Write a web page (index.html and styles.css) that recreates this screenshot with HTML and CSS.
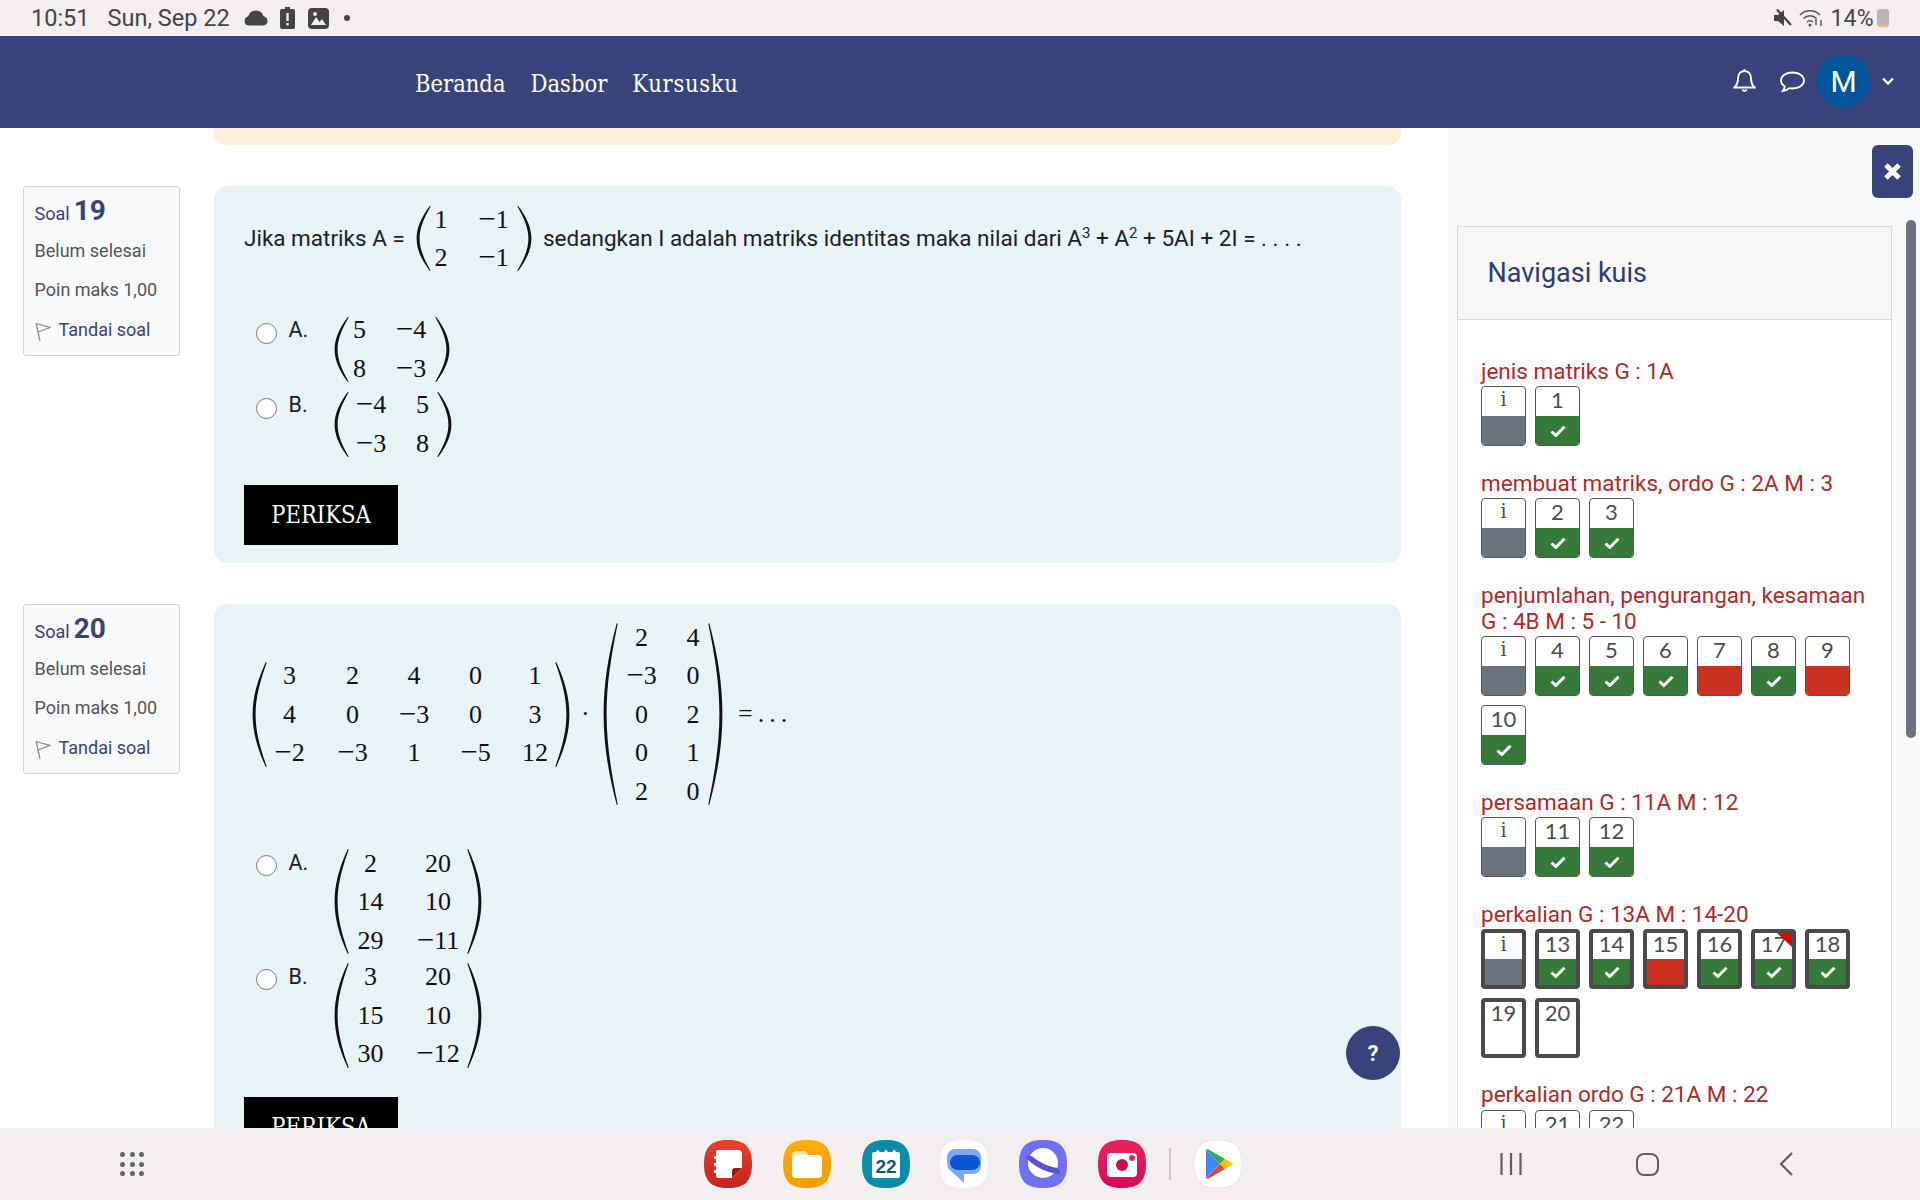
FILE: index.html
```html
<!DOCTYPE html>
<html lang="id">
<head>
<meta charset="utf-8">
<title>Kuis</title>
<link rel="stylesheet" href="styles.css">
</head>
<body>
<svg class="defs" aria-hidden="true">
  <symbol id="paren" viewBox="0 0 15 100" preserveAspectRatio="none"><path d="M13.800 0C5 18 .6 34 .6 50S5 82 13.800 100l.9-.4C7.800 81 3.600 66 3.600 50S7.800 19 14.700.4Z"/></symbol>
  <symbol id="check" viewBox="0 0 16 12"><path d="M1.500 6.500 5.800 10.500 14.500 1.800" fill="none" stroke="#fff" stroke-width="3"/></symbol>
  <symbol id="flag" viewBox="0 0 16 20"><path d="M1 1 5 19M1 1.500 15 5.500 3 10" fill="none" stroke="#8a8a8a" stroke-width="1.300"/></symbol>
</svg>
<div class="app">
  <div class="status">
    <span class="time">10:51</span><span class="date">Sun, Sep 22</span>
    <svg class="si si-cloud" viewBox="0 0 25 16"><path d="M5 15.500a4.500 4.500 0 0 1-.8-8.900A8 8 0 0 1 12 .5a8 8 0 0 1 7.500 5.800A4.700 4.700 0 0 1 20 15.500Z" fill="#444"/></svg>
    <svg class="si si-batt" viewBox="0 0 15 22"><path d="M5 0h5v2h3a2 2 0 0 1 2 2v16a2 2 0 0 1-2 2H2a2 2 0 0 1-2-2V4a2 2 0 0 1 2-2h3Z" fill="#444"/><rect x="6.300" y="6" width="2.400" height="8" fill="#f3eff1"/><rect x="6.300" y="16" width="2.400" height="2.400" fill="#f3eff1"/></svg>
    <svg class="si si-img" viewBox="0 0 21 21"><rect width="21" height="21" rx="4" fill="#444"/><path d="M3 17 8 9l3.500 5L14 11l4 6Z" fill="#f3eff1"/><circle cx="7" cy="6" r="2" fill="#f3eff1"/></svg>
    <span class="sdot"></span>
    <span class="status-right">
      <svg class="si si-mute" viewBox="0 0 18 18"><path d="M0 6h4l6-5v16l-6-5H0Z" fill="#444"/><path d="M3 .5 17 16" stroke="#444" stroke-width="2.200"/></svg>
      <svg class="si si-wifi" viewBox="0 0 25 18"><g fill="none" stroke="#555" stroke-width="1.500"><path d="M1 6a14 14 0 0 1 20 0"/><path d="M4.500 9.500a9 9 0 0 1 13 0"/><path d="M8 13a4 4 0 0 1 6 0"/></g><circle cx="11" cy="16" r="1.500" fill="#555"/><path d="M17 10v6M22 17v-6" stroke="#444" stroke-width="1.300"/></svg>
      <span class="pct">14%</span>
      <span class="sbatt"></span>
    </span>
  </div>

  <header class="top">
    <nav class="menu"><a>Beranda</a><a>Dasbor</a><a>Kursusku</a></nav>
    <div class="usernav">
      <svg class="bell" viewBox="0 0 23 25"><path d="M11.500 3c4.500 0 6.500 3.500 6.500 7.500 0 4.500 1.500 7 3.500 9H1.500c2-2 3.500-4.500 3.500-9C5 6.500 7 3 11.500 3ZM11.500 1v2M9.500 21.500c.5 1.800 3.500 1.800 4 0" fill="none" stroke="#fff" stroke-width="1.900"/></svg>
      <svg class="chat" viewBox="0 0 25 22"><path d="M12.500 1.500C6 1.500 1 5 1 9.500c0 2.600 1.600 4.600 3.800 6-.3 1.800-1 3.300-2 4.500 2.600-.4 5-1.400 6.500-2.800 1 .2 2.100.3 3.200.3 6.500 0 11.500-3.500 11.500-8s-5-8-11.500-8Z" fill="none" stroke="#fff" stroke-width="1.800"/></svg>
      <span class="avatar">M</span>
      <svg class="chev" viewBox="0 0 12 8"><path d="M1 1.500 6 6.500 11 1.500" fill="none" stroke="#fff" stroke-width="2.400"/></svg>
    </div>
  </header>

  <main class="main">
    <section class="content">
      <div class="notice"></div>

      <article class="q">
        <div class="info">
          <div class="qno">Soal <b>19</b></div>
          <div class="inf">Belum selesai</div>
          <div class="inf">Poin maks 1,00</div>
          <div class="inf tandai"><svg class="flag"><use href="#flag"/></svg>Tandai soal</div>
        </div>
        <div class="qbox">
          <div class="qtext">
            <span class="t1">Jika matriks A =</span>
            <span class="mx r2">
              <svg class="par"><use href="#paren"/></svg>
              <span class="grid g-q19"><i>1</i><i><span class="m">−</span>1</i><i>2</i><i><span class="m">−</span>1</i></span>
              <svg class="par flip"><use href="#paren"/></svg>
            </span>
            <span class="t2">sedangkan I adalah matriks identitas maka nilai dari A<sup>3</sup> + A<sup>2</sup> + 5AI + 2I = . . . .</span>
          </div>
          <div class="opts">
            <div class="opt"><input class="radio" type="radio" name="q19"><span class="lab">A.</span>
              <span class="mx r2"><svg class="par"><use href="#paren"/></svg><span class="grid g-a19"><i>5</i><i><span class="m">−</span>4</i><i>8</i><i><span class="m">−</span>3</i></span><svg class="par flip"><use href="#paren"/></svg></span></div>
            <div class="opt"><input class="radio" type="radio" name="q19"><span class="lab">B.</span>
              <span class="mx r2"><svg class="par"><use href="#paren"/></svg><span class="grid g-b19"><i><span class="m">−</span>4</i><i>5</i><i><span class="m">−</span>3</i><i>8</i></span><svg class="par flip"><use href="#paren"/></svg></span></div>
          </div>
          <button class="check-btn">PERIKSA</button>
        </div>
      </article>

      <article class="q">
        <div class="info">
          <div class="qno">Soal <b>20</b></div>
          <div class="inf">Belum selesai</div>
          <div class="inf">Poin maks 1,00</div>
          <div class="inf tandai"><svg class="flag"><use href="#flag"/></svg>Tandai soal</div>
        </div>
        <div class="qbox">
          <div class="qmath">
            <span class="mx r3"><svg class="par"><use href="#paren"/></svg>
              <span class="grid g-m1"><i>3</i><i>2</i><i>4</i><i>0</i><i>1</i><i>4</i><i>0</i><i><span class="m">−</span>3</i><i>0</i><i>3</i><i><span class="m">−</span>2</i><i><span class="m">−</span>3</i><i>1</i><i><span class="m">−</span>5</i><i>12</i></span>
              <svg class="par flip"><use href="#paren"/></svg></span>
            <span class="cdot">·</span>
            <span class="mx r5"><svg class="par"><use href="#paren"/></svg>
              <span class="grid g-m2"><i>2</i><i>4</i><i><span class="m">−</span>3</i><i>0</i><i>0</i><i>2</i><i>0</i><i>1</i><i>2</i><i>0</i></span>
              <svg class="par flip"><use href="#paren"/></svg></span>
            <span class="eq">=...</span>
          </div>
          <div class="opts">
            <div class="opt"><input class="radio" type="radio" name="q20"><span class="lab">A.</span>
              <span class="mx r3"><svg class="par"><use href="#paren"/></svg><span class="grid g-o20"><i>2</i><i>20</i><i>14</i><i>10</i><i>29</i><i><span class="m">−</span>11</i></span><svg class="par flip"><use href="#paren"/></svg></span></div>
            <div class="opt"><input class="radio" type="radio" name="q20"><span class="lab">B.</span>
              <span class="mx r3"><svg class="par"><use href="#paren"/></svg><span class="grid g-o20"><i>3</i><i>20</i><i>15</i><i>10</i><i>30</i><i><span class="m">−</span>12</i></span><svg class="par flip"><use href="#paren"/></svg></span></div>
          </div>
          <button class="check-btn">PERIKSA</button>
        </div>
      </article>
      <button class="help">?</button>
    </section>

    <aside class="side">
      <button class="close"><svg viewBox="0 0 16 16"><path d="M2.500 2.500 13.500 13.500M13.500 2.500 2.500 13.500" stroke="#fff" stroke-width="4.200"/></svg></button>
      <div class="panel">
        <h2 class="panel-h">Navigasi kuis</h2>
        <div class="panel-b">
          <div class="grp">
            <div class="gt">jenis matriks G : 1A</div>
            <div class="btns">
              <a class="qn"><span class="n ni">i</span><span class="st grey"></span></a>
              <a class="qn"><span class="n">1</span><span class="st green"><svg class="ck"><use href="#check"/></svg></span></a>
            </div>
          </div>
          <div class="grp">
            <div class="gt">membuat matriks, ordo G : 2A M : 3</div>
            <div class="btns">
              <a class="qn"><span class="n ni">i</span><span class="st grey"></span></a>
              <a class="qn"><span class="n">2</span><span class="st green"><svg class="ck"><use href="#check"/></svg></span></a>
              <a class="qn"><span class="n">3</span><span class="st green"><svg class="ck"><use href="#check"/></svg></span></a>
            </div>
          </div>
          <div class="grp">
            <div class="gt">penjumlahan, pengurangan, kesamaan G : 4B M : 5 - 10</div>
            <div class="btns">
              <a class="qn"><span class="n ni">i</span><span class="st grey"></span></a>
              <a class="qn"><span class="n">4</span><span class="st green"><svg class="ck"><use href="#check"/></svg></span></a>
              <a class="qn"><span class="n">5</span><span class="st green"><svg class="ck"><use href="#check"/></svg></span></a>
              <a class="qn"><span class="n">6</span><span class="st green"><svg class="ck"><use href="#check"/></svg></span></a>
              <a class="qn"><span class="n">7</span><span class="st red"></span></a>
              <a class="qn"><span class="n">8</span><span class="st green"><svg class="ck"><use href="#check"/></svg></span></a>
              <a class="qn"><span class="n">9</span><span class="st red"></span></a>
              <a class="qn"><span class="n">10</span><span class="st green"><svg class="ck"><use href="#check"/></svg></span></a>
            </div>
          </div>
          <div class="grp">
            <div class="gt">persamaan G : 11A M : 12</div>
            <div class="btns">
              <a class="qn"><span class="n ni">i</span><span class="st grey"></span></a>
              <a class="qn"><span class="n">11</span><span class="st green"><svg class="ck"><use href="#check"/></svg></span></a>
              <a class="qn"><span class="n">12</span><span class="st green"><svg class="ck"><use href="#check"/></svg></span></a>
            </div>
          </div>
          <div class="grp">
            <div class="gt">perkalian G : 13A M : 14-20</div>
            <div class="btns">
              <a class="qn cur"><span class="n ni">i</span><span class="st grey"></span></a>
              <a class="qn cur"><span class="n">13</span><span class="st green"><svg class="ck"><use href="#check"/></svg></span></a>
              <a class="qn cur"><span class="n">14</span><span class="st green"><svg class="ck"><use href="#check"/></svg></span></a>
              <a class="qn cur"><span class="n">15</span><span class="st red"></span></a>
              <a class="qn cur"><span class="n">16</span><span class="st green"><svg class="ck"><use href="#check"/></svg></span></a>
              <a class="qn cur"><span class="n">17</span><span class="st green"><svg class="ck"><use href="#check"/></svg></span><span class="flagged"></span></a>
              <a class="qn cur"><span class="n">18</span><span class="st green"><svg class="ck"><use href="#check"/></svg></span></a>
              <a class="qn cur"><span class="n">19</span><span class="st"></span></a>
              <a class="qn cur"><span class="n">20</span><span class="st"></span></a>
            </div>
          </div>
          <div class="grp">
            <div class="gt">perkalian ordo G : 21A M : 22</div>
            <div class="btns">
              <a class="qn"><span class="n ni">i</span><span class="st grey"></span></a>
              <a class="qn"><span class="n">21</span><span class="st green"></span></a>
              <a class="qn"><span class="n">22</span><span class="st green"></span></a>
            </div>
          </div>
        </div>
      </div>
      <span class="thumb"></span>
    </aside>
  </main>

  <footer class="bar">
    <div class="apps"><i></i><i></i><i></i><i></i><i></i><i></i><i></i><i></i><i></i></div>
    <div class="dock">
      <svg class="dk" viewBox="0 0 48 48"><defs><linearGradient id="r1" x1="0" y1="0" x2="0" y2="1"><stop offset="0" stop-color="#e8432e"/><stop offset="1" stop-color="#c4231d"/></linearGradient></defs><path d="M24 0C41 0 48 7 48 24S41 48 24 48 0 41 0 24 7 0 24 0Z" fill="url(#r1)"/><path d="M14 10h20a4 4 0 0 1 4 4v14l-10 10H14a2 2 0 0 1-2-2v-3h-2v-3h2v-4h-2v-3h2v-4h-2v-3h2v-4a2 2 0 0 1 2-2Z" fill="#fff"/><path d="M38 28H31a3 3 0 0 0-3 3v7Z" fill="#8e1d18"/></svg>
      <svg class="dk" viewBox="0 0 48 48"><defs><linearGradient id="y1" x1="0" y1="0" x2="0" y2="1"><stop offset="0" stop-color="#fbae0b"/><stop offset="1" stop-color="#f79a00"/></linearGradient></defs><path d="M24 0C41 0 48 7 48 24S41 48 24 48 0 41 0 24 7 0 24 0Z" fill="url(#y1)"/><path d="M9 15a4 4 0 0 1 4-4h8a4 4 0 0 1 4 4v2H9Z" fill="#fde3ad"/><rect x="9" y="15" width="30" height="23" rx="4" fill="#fff"/></svg>
      <svg class="dk" viewBox="0 0 48 48"><path d="M24 0C41 0 48 7 48 24S41 48 24 48 0 41 0 24 7 0 24 0Z" fill="#0a8cab"/><path d="M12 12l2 0 1.500-2.500L18 12h4l2-2.500L26 12h4l2.500-2.500L34 12h2a2 2 0 0 1 2 2v22a2 2 0 0 1-2 2H12a2 2 0 0 1-2-2V14a2 2 0 0 1 2-2Z" fill="#fff"/><text class="cal" x="24" y="32.500">22</text></svg>
      <svg class="dk" viewBox="0 0 48 48"><path d="M24 0C41 0 48 7 48 24S41 48 24 48 0 41 0 24 7 0 24 0Z" fill="#fff"/><path d="M15 9h18a8 8 0 0 1 8 8v9a8 8 0 0 1-8 8h-9v9L12 32a11 11 0 0 1-5-9v-6a8 8 0 0 1 8-8Z" fill="#7fa8f8"/><rect x="10" y="15" width="30" height="15" rx="7.500" fill="#0b57d0"/></svg>
      <svg class="dk" viewBox="0 0 48 48"><path d="M24 0C41 0 48 7 48 24S41 48 24 48 0 41 0 24 7 0 24 0Z" fill="#7070f2"/><circle cx="24" cy="23" r="15" fill="#fff"/><path d="M7 17c5 8 22 17 35 17-2 0-1-3-3-6-8-1-18-5-25-11-3-2-6-2-7 0Z" fill="#5a55cc"/></svg>
      <svg class="dk" viewBox="0 0 48 48"><defs><linearGradient id="p1" x1="0" y1="0" x2="0" y2="1"><stop offset="0" stop-color="#e8245a"/><stop offset="1" stop-color="#d80a5a"/></linearGradient></defs><path d="M24 0C41 0 48 7 48 24S41 48 24 48 0 41 0 24 7 0 24 0Z" fill="url(#p1)"/><rect x="9" y="13" width="30" height="24" rx="4" fill="#fff"/><circle cx="24" cy="25" r="6" fill="#c4104f"/><circle cx="34" cy="18" r="3" fill="#e0245a"/></svg>
      <span class="dock-sep"></span>
      <svg class="dk" viewBox="0 0 48 48"><path d="M24 0C41 0 48 7 48 24S41 48 24 48 0 41 0 24 7 0 24 0Z" fill="#fff" stroke="#e8e4e6"/><path d="M12 10v28l14-14Z" fill="#4285f4"/><path d="M12 10c1-1 2-1 3-.3L31 19l-5 5Z" fill="#34a853"/><path d="M12 38c1 1 2 1 3 .3L31 29l-5-5Z" fill="#ea4335"/><path d="M31 19l7 4c1 .6 1 1.400 0 2l-7 4-5-5Z" fill="#fbbc04"/></svg>
    </div>
    <div class="softkeys">
      <svg class="sk-rec" viewBox="0 0 22 22"><path d="M1.500 0v22M11 0v22M20.500 0v22" stroke="#5f5f5f" stroke-width="2.200"/></svg>
      <span class="sk-home"></span>
      <svg class="sk-back" viewBox="0 0 14 24"><path d="M13 1 2 12l11 11" fill="none" stroke="#5f5f5f" stroke-width="2.200"/></svg>
    </div>
  </footer>
</div>
</body>
</html>
```
FILE: styles.css
```css
* { box-sizing: border-box; }
html, body { margin: 0; height: 100%; }
body { font-family: Roboto, "Liberation Sans", sans-serif; background: #fff; overflow: hidden; }
.defs { position: absolute; width: 0; height: 0; }
.app { display: flex; flex-direction: column; height: 1200px; width: 1920px; }

/* status bar */
.status { height: 36px; background: #f3eff1; display: flex; align-items: center; padding: 0 31px; color: #454545; font-size: 23.500px; flex: none; }
.time { margin-right: 18px; }
.si { flex: none; }
.si-cloud { width: 25px; height: 16px; margin-left: 14.500px; }
.si-batt { width: 15px; height: 22px; margin-left: 11px; }
.si-img { width: 21px; height: 21px; margin-left: 13px; }
.sdot { width: 6px; height: 6px; border-radius: 50%; background: #444; margin-left: 15px; }
.status-right { margin-left: auto; display: flex; align-items: center; }
.si-mute { width: 18px; height: 18px; }
.si-wifi { width: 25px; height: 18px; margin-left: 7px; }
.pct { margin-left: 6px; font-size: 23px; letter-spacing: .3px; }
.sbatt { width: 12px; height: 18px; margin-left: 3px; border-radius: 3px; background: linear-gradient(#b9b5b7 82%, #f3a994 82%); }

/* header */
.top { height: 92px; background: #38437c; display: flex; align-items: center; padding: 0 26px 0 415px; flex: none; }
.menu { display: flex; gap: 25px; font-family: "DejaVu Serif Condensed", "DejaVu Serif", serif; font-size: 23.500px; color: #fff; padding-top: 4px; }
.menu a:last-child { letter-spacing: .7px; }
.usernav { margin-left: auto; display: flex; align-items: center; }
.bell { width: 23px; height: 25px; margin-bottom: 3px; }
.chat { width: 25px; height: 22px; margin-left: 24px; }
.avatar { width: 53px; height: 53px; border-radius: 50%; background: #00559c; color: #fff; font-size: 30px; font-weight: 400; display: flex; align-items: center; justify-content: center; margin-left: 12px; margin-bottom: 2px; }
.chev { width: 12px; height: 8px; margin-left: 12px; margin-bottom: 3px; }

/* main */
.main { flex: 1; min-height: 0; display: flex; overflow: hidden; position: relative; }
.content { width: 1448px; flex: none; position: relative; overflow: hidden; }
.notice { width: 1187px; height: 17px; margin-left: 214px; background: #fcefdc; border-radius: 0 0 12px 12px; }
.q { display: grid; grid-template-columns: 157px 1187px; column-gap: 34.500px; padding-left: 22.500px; margin-top: 41px; align-items: start; }
.info { height: 170px; background: #f8f9fa; border: 1px solid #ced4da; border-radius: 3px; padding: 7px 0 0 11px; font-size: 18px; color: #555; }
.qno { height: 37px; display: flex; align-items: baseline; gap: 4px; color: #38437c; }
.qno b { font-size: 28px; font-weight: 700; }
.inf { height: 39px; line-height: 39px; }
.tandai { color: #38437c; display: flex; align-items: center; height: 41px; }
.flag { width: 16px; height: 20px; margin-right: 8px; margin-top: 4px; }

.qbox { background: #e7f3f5; border-radius: 14px; padding: 14px 0 18px 30px; color: #1d2125; }
.qtext { display: flex; align-items: center; font-size: 22.500px; }
.t1 { width: 172px; flex: none; margin-top: -2px; }
.t2 { margin-left: 11px; margin-top: -2px; }
.t2 sup { font-size: 15px; line-height: 0; }
.mx { display: inline-flex; align-items: center; font-family: "Liberation Serif", serif; font-size: 26px; color: #111; flex: none; }
.par { width: 15px; fill: #111; display: block; flex: none; }
.r2 .par { height: 65px; }
.r3 .par { height: 105px; }
.r5 .par { height: 182px; }
.flip { transform: scaleX(-1); }
.grid { display: grid; grid-auto-rows: 38.500px; align-items: center; justify-items: center; }
.grid i { font-style: normal; white-space: nowrap; padding-top: 1px; }
.m { font-size: 31px; line-height: 0; vertical-align: -1px; }
.g-q19 { grid-template-columns: 20px 33px; column-gap: 26px; padding-right: 7px; }
.g-a19 { grid-template-columns: 22px 33px; column-gap: 24px; padding-right: 7px; }
.g-b19 { grid-template-columns: 33px 20px; column-gap: 25px; padding: 0 4px 0 6px; }
.g-m1 { grid-template-columns: 33px 33px 30px 33px 26px; column-gap: 30px; padding: 0 6.500px 0 6px; }
.g-m2 { grid-template-columns: 33px 20px; column-gap: 25px; padding: 0 5px 0 7px; }
.g-o20 { grid-template-columns: 26px 45px; column-gap: 32px; padding: 0 6px 0 9px; }

.qmath { display: flex; align-items: center; margin-left: 8px; height: 192.500px; }
.cdot { font-family: "Liberation Serif", serif; font-size: 26px; width: 33.500px; text-align: center; color: #111; padding-right: 2px; }
.eq { font-family: "Liberation Serif", serif; font-size: 26px; color: #111; margin-left: 15px; letter-spacing: 5px; }

.opts { margin-top: 33.500px; }
.opt { display: flex; align-items: flex-start; margin-bottom: -2px; }
.opt:last-child { margin-bottom: 0; }
.radio { appearance: none; margin: 12px 11.500px 0 12px; width: 21px; height: 21px; border: 1.500px solid #777; border-radius: 50%; background: #fff; flex: none; }
.qmath + .opts .radio { margin-top: 11px; }
.lab { width: 45px; line-height: 37px; font-size: 21.500px; flex: none; }
.check-btn { display: block; margin-top: 24px; width: 154px; height: 60px; background: #000; color: #fff; border: 0; font-family: "DejaVu Serif Condensed", "DejaVu Serif", serif; font-size: 23.500px; padding: 0; }
.qtext ~ .check-btn { margin-top: 22.500px; }
.help { position: absolute; left: 1346px; top: 898px; width: 54px; height: 54px; border-radius: 50%; background: #38437c; color: #fff; border: 0; font: 700 22px Roboto, sans-serif; padding: 0; }

/* side */
.side { flex: 1; background: #f8f9fa; position: relative; padding: 98px 0 0 9px; overflow: hidden; }
.close { position: absolute; left: 424px; top: 17px; width: 41px; height: 53px; border-radius: 6px; background: #38437c; border: 0; padding: 0; display: flex; align-items: center; justify-content: center; }
.close svg { width: 19px; height: 19px; }
.thumb { position: absolute; left: 458px; top: 92px; width: 10px; height: 518px; background: #6a737d; border-radius: 5px; }
.panel { width: 435px; background: #fff; border: 1px solid #d6d8db; height: 1100px; }
.panel-h { margin: 0; height: 93px; line-height: 92px; padding-left: 29.500px; background: #f7f7f8; border-bottom: 1px solid #d6d8db; font-size: 27px; font-weight: 400; color: #2f3b73; }
.panel-b { padding: 40px 0 0 23px; }
.grp { margin-bottom: 16.400px; }
.gt { color: #b02a2a; font-size: 22.500px; line-height: 26.400px; width: 395px; margin: -2px 0 2px; }
.btns { display: flex; flex-wrap: wrap; gap: 9px; padding-bottom: 9px; }
.qn { width: 45px; height: 60px; border: 1px solid #555; border-radius: 4px; display: flex; flex-direction: column; overflow: hidden; position: relative; background: #fff; }
.n { height: 29px; line-height: 25px; text-align: center; font-size: 22px; color: #4d4d4d; font-family: Lato, sans-serif; font-weight: 400; }
.ni { font-family: "DejaVu Serif Condensed", "DejaVu Serif", serif; font-size: 21px; }
.st { flex: 1; display: flex; align-items: center; justify-content: center; }
.grey { background: #6a737d; }
.green { background: #357a38; }
.red { background: #ca3120; }
.ck { width: 16px; height: 12px; }
.cur { border: 4px solid #4a4a4a; }
.cur .n { height: 26px; line-height: 22px; }
.flagged { position: absolute; right: 0; top: 0; border-top: 14px solid #e60000; border-left: 15px solid transparent; }

/* bottom bar */
.bar { height: 72px; flex: none; background: #f3eff1; display: flex; align-items: center; position: relative; }
.apps { display: grid; grid-template-columns: repeat(3, 5px); gap: 4.500px; margin-left: 120px; width: 30px; }
.apps i { width: 5px; height: 5px; border-radius: 50%; background: #666; }
.dock { display: flex; align-items: center; gap: 30.800px; margin-left: 554px; }
.dk { width: 48px; height: 48px; flex: none; }
.dock-sep { width: 2px; height: 32px; background: #c8c5c7; margin: 0 -8px; }
.cal { font: 700 19px "Liberation Sans", sans-serif; fill: #0d5c80; text-anchor: middle; }
.softkeys { display: flex; align-items: center; margin-left: 258.500px; }
.sk-rec { width: 22px; height: 22px; }
.sk-home { width: 23px; height: 23px; border: 2.400px solid #5f5f5f; border-radius: 8px; margin-left: 114px; }
.sk-back { width: 14px; height: 24px; margin-left: 120px; }
```
